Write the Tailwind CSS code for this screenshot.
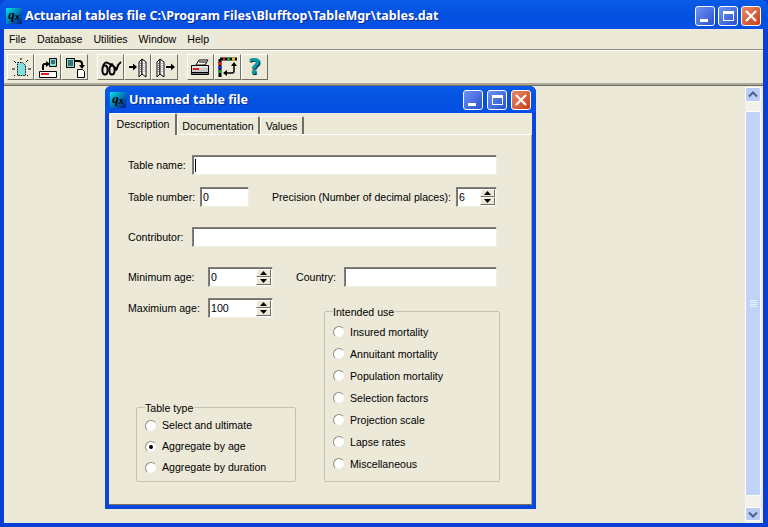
<!DOCTYPE html>
<html>
<head>
<meta charset="utf-8">
<script src="https://cdn.jsdelivr.net/npm/@tailwindcss/browser@4"></script>
</head>
<body class="m-0 overflow-hidden bg-[#ece9d8]">
<div class="relative flex h-[527px] w-[768px] flex-col overflow-hidden bg-[#0a3fd6] font-['Liberation_Sans',sans-serif] text-[10.6px] leading-none text-black">

  <!-- main title bar -->
  <div class="flex h-[29px] shrink-0 items-center rounded-t-[7px] bg-gradient-to-b from-[#0a5be8] via-[#0451e0] to-[#0550e6] pl-[6px] pr-[7px] pt-[3px]">
    <div class="flex h-4 w-4 items-start justify-center bg-gradient-to-br from-[#19e6e6] to-[#0a0a80] font-['Liberation_Serif',serif] text-[13px] font-bold italic text-black">q<span class="mt-[4px] text-[10px]">x</span></div>
    <div class="ml-[3px] flex-1 whitespace-nowrap font-['Noto_Sans',sans-serif] text-[12.5px] font-bold text-white [text-shadow:1px_1px_0_#0a2f9c]">Actuarial tables file C:\Program Files\Blufftop\TableMgr\tables.dat</div>
    <div class="flex gap-[3px]">
      <div class="flex h-[20px] w-[20px] items-end justify-start rounded-[3px] border border-white bg-gradient-to-br from-[#6f93f0] to-[#2a50d0] pb-[3px] pl-[4px]"><div class="h-[3px] w-[8px] bg-white"></div></div>
      <div class="flex h-[20px] w-[20px] items-center justify-center rounded-[3px] border border-white bg-gradient-to-br from-[#6f93f0] to-[#2a50d0]"><div class="h-[10px] w-[11px] border border-t-[3px] border-white"></div></div>
      <div class="flex h-[20px] w-[20px] items-center justify-center rounded-[3px] border border-white bg-gradient-to-br from-[#e88a66] to-[#c83a16]"><svg width="12" height="12" viewBox="0 0 12 12"><path d="M1 1L11 11M11 1L1 11" stroke="#fff" stroke-width="2.2"/></svg></div>
    </div>
  </div>

  <div class="flex min-h-0 flex-1 pb-[4px] pl-[4px] pr-[5px]">
    <div class="flex min-w-0 flex-1 flex-col bg-[#ece9d8]">
      <!-- menu -->
      <div class="flex h-[20px] shrink-0 items-center gap-[11px] border-b border-[#ece9d8] pl-[5px] pt-[2px]">
        <span>File</span><span>Database</span><span>Utilities</span><span>Window</span><span>Help</span>
      </div>
      <!-- toolbar -->
      <div class="flex h-[34px] shrink-0 items-center border-t border-[#8f8d7f] shadow-[inset_0_1px_0_#fff] pl-[3px] pt-[1px]">
        <div class="flex">
          <div class="flex h-[26px] w-[27px] items-center justify-center border border-b-[#716f64] border-l-white border-r-[#716f64] border-t-white bg-[#ece9d8]">
            <svg width="24" height="24" viewBox="0 0 24 24"><path d="M8.500 7.500h5l3 3v10h-8z" fill="#7fe0e0"/><path d="M8.500 7.500h5l3 3v10h-8z" fill="none" stroke="#000" stroke-dasharray="1.500 1"/><path d="M12 3v2M5 6l2 2M3 14h3M5 21l1-1M19 14h3M19 5l-2 2M19 21l-1-1" stroke="#000"/></svg>
          </div>
          <div class="flex h-[26px] w-[27px] items-center justify-center border border-b-[#716f64] border-l-white border-r-[#716f64] border-t-white bg-[#ece9d8]">
            <svg width="24" height="24" viewBox="0 0 24 24"><path d="M13.5 3.5h7v8h-7z" fill="#7fe0e0" stroke="#000"/><path d="M15 6h4M15 8h4" stroke="#000"/><path d="M7 15v-4q0-2 2-2h2" fill="none" stroke="#000" stroke-width="2"/><path d="M10 6l4 3-4 3z"/><path d="M3.5 16.5h17v6h-17z" fill="#fff" stroke="#000"/><path d="M5 19h8" stroke="#e02020" stroke-width="2"/></svg>
          </div>
          <div class="flex h-[26px] w-[27px] items-center justify-center border border-b-[#716f64] border-l-white border-r-[#716f64] border-t-white bg-[#ece9d8]">
            <svg width="24" height="24" viewBox="0 0 24 24"><path d="M3.5 3.5h8v9h-8z" fill="#7fe0e0" stroke="#000"/><path d="M5 6h5M5 8h5M5 10h5" stroke="#000"/><path d="M12 6h4q3 0 3 3v2" fill="none" stroke="#000" stroke-width="2"/><path d="M16 10h6l-3 4z"/><path d="M14.5 14.5h5l2 2v6h-7z" fill="#fff" stroke="#000"/></svg>
          </div>
        </div>
        <div class="ml-[9px] flex">
          <div class="flex h-[26px] w-[27px] items-center justify-center border border-b-[#716f64] border-l-white border-r-[#716f64] border-t-white bg-[#ece9d8]">
            <svg width="24" height="24" viewBox="0 0 24 24"><g fill="none" stroke="#000" stroke-width="2"><ellipse cx="6" cy="15" rx="2.600" ry="4.500"/><ellipse cx="13" cy="15" rx="2.600" ry="4.500"/><path d="M4 11q2-5 5-3t5 1"/><path d="M16 12q1 5 2 1t4-6"/></g></svg>
          </div>
          <div class="flex h-[26px] w-[27px] items-center justify-center border border-b-[#716f64] border-l-white border-r-[#716f64] border-t-white bg-[#ece9d8]">
            <svg width="24" height="24" viewBox="0 0 24 24"><path d="M3 12h5" stroke="#000" stroke-width="2"/><path d="M7 8.500l4 3.500-4 3.500z"/><g fill="#fff" stroke="#000"><path d="M13 7l3-3v15l-3 3z"/><path d="M16 4l4 3v15l-4-3z"/></g><path d="M14.500 8v9M18 8v9" stroke="#808080" stroke-dasharray="1 1"/></svg>
          </div>
          <div class="flex h-[26px] w-[27px] items-center justify-center border border-b-[#716f64] border-l-white border-r-[#716f64] border-t-white bg-[#ece9d8]">
            <svg width="24" height="24" viewBox="0 0 24 24"><g fill="#fff" stroke="#000"><path d="M4 7l3-3v15l-3 3z"/><path d="M7 4l4 3v15l-4-3z"/></g><path d="M5.500 8v9M9 8v9" stroke="#808080" stroke-dasharray="1 1"/><path d="M13 12h6" stroke="#000" stroke-width="2"/><path d="M18 8.500l4 3.500-4 3.500z"/></svg>
          </div>
        </div>
        <div class="ml-[9px] flex">
          <div class="flex h-[26px] w-[27px] items-center justify-center border border-b-[#716f64] border-l-white border-r-[#716f64] border-t-white bg-[#ece9d8]">
            <svg width="24" height="24" viewBox="0 0 24 24"><path d="M7 10l3-5h9l-3 5z" fill="#fff" stroke="#000"/><path d="M10 7h7" stroke="#000"/><path d="M2.500 10.500h17v7h-17z" fill="#c8c8c8" stroke="#000"/><path d="M2.500 17.500h17v2h-17z" fill="#707070" stroke="#000"/><path d="M4 14h6" stroke="#e02020" stroke-width="2"/><path d="M3 12h16" stroke="#fff"/></svg>
          </div>
          <div class="flex h-[26px] w-[27px] items-center justify-center border border-b-[#716f64] border-l-white border-r-[#716f64] border-t-white bg-[#ece9d8]">
            <svg width="24" height="24" viewBox="0 0 24 24"><path d="M4 4h17" stroke="#000" stroke-width="3"/><path d="M7 4h2" stroke="#e02020" stroke-width="3"/><path d="M11 4h3" stroke="#20a020" stroke-width="3"/><path d="M16 4h3" stroke="#e0c020" stroke-width="3"/><path d="M4 4v18" stroke="#000" stroke-width="3"/><path d="M4 7v3" stroke="#e02020" stroke-width="3"/><path d="M4 11v3" stroke="#2020e0" stroke-width="3"/><path d="M4 15v3" stroke="#20a020" stroke-width="3"/><path d="M18 9v7q0 2-2 2H11" fill="none" stroke="#000" stroke-width="1.500"/><path d="M11 15l-4 3 4 3zM15 11l3-4 3 4z"/></svg>
          </div>
          <div class="flex h-[26px] w-[27px] items-center justify-center border border-b-[#716f64] border-l-white border-r-[#716f64] border-t-white bg-[#ece9d8] font-['DejaVu_Sans',sans-serif] text-[22px] font-bold text-[#0a9a9a] [text-shadow:1px_1px_0_#06305a]">?</div>
        </div>
      </div>

      <!-- MDI client area -->
      <div class="relative flex min-h-0 flex-1 justify-end border-t-2 border-t-[#aca899] shadow-[inset_0_1px_0_#716f64]">
        <!-- scrollbar -->
        <div class="mr-[2px] mt-[2px] flex w-[16px] flex-col bg-[#f3f1ec]">
          <div class="flex h-[15px] w-[16px] items-center justify-center rounded-[2px] border border-white bg-[#b9cdf8]"><svg width="10" height="7" viewBox="0 0 10 7"><path d="M1 5.500L5 1.500L9 5.500" fill="none" stroke="#4d6185" stroke-width="2"/></svg></div>
          <div class="mt-[9px] flex h-[385px] w-[16px] items-center justify-center rounded-[2px] border border-white bg-[#c1d3fb]">
            <div class="flex w-[7px] flex-col gap-[1px]"><div class="h-px bg-[#eef4fe]"></div><div class="h-px bg-[#eef4fe]"></div><div class="h-px bg-[#eef4fe]"></div><div class="h-px bg-[#eef4fe]"></div></div>
          </div>
          <div class="mt-[11px] flex h-[14px] w-[16px] items-center justify-center rounded-[2px] border border-white bg-[#b9cdf8]"><svg width="10" height="7" viewBox="0 0 10 7"><path d="M1 1.500L5 5.500L9 1.500" fill="none" stroke="#4d6185" stroke-width="2"/></svg></div>
        </div>

        <!-- child window -->
        <div class="absolute left-[101px] top-[1px] flex h-[423px] w-[431px] flex-col rounded-t-[6px] bg-[#0a45dc]">
          <div class="flex h-[27px] shrink-0 items-center rounded-t-[6px] bg-gradient-to-b from-[#0a5be8] via-[#0451e0] to-[#0550e6] pl-[5px] pr-[5px] pt-[1px]">
            <div class="flex h-4 w-4 items-start justify-center bg-gradient-to-br from-[#19e6e6] to-[#0a0a80] font-['Liberation_Serif',serif] text-[13px] font-bold italic text-black">q<span class="mt-[4px] text-[10px]">x</span></div>
            <div class="ml-[3px] flex-1 whitespace-nowrap font-['Noto_Sans',sans-serif] text-[12.5px] font-bold text-white [text-shadow:1px_1px_0_#0a2f9c]">Unnamed table file</div>
            <div class="flex gap-[4px]">
              <div class="flex h-[20px] w-[20px] items-end justify-start rounded-[3px] border border-white bg-gradient-to-br from-[#6f93f0] to-[#2a50d0] pb-[3px] pl-[4px]"><div class="h-[3px] w-[8px] bg-white"></div></div>
              <div class="flex h-[20px] w-[20px] items-center justify-center rounded-[3px] border border-white bg-gradient-to-br from-[#6f93f0] to-[#2a50d0]"><div class="h-[10px] w-[11px] border border-t-[3px] border-white"></div></div>
              <div class="flex h-[20px] w-[20px] items-center justify-center rounded-[3px] border border-white bg-gradient-to-br from-[#e88a66] to-[#c83a16]"><svg width="12" height="12" viewBox="0 0 12 12"><path d="M1 1L11 11M11 1L1 11" stroke="#fff" stroke-width="2.2"/></svg></div>
            </div>
          </div>

          <div class="mx-[4px] mb-[4px] flex min-h-0 flex-1 flex-col bg-[#ece9d8]">
            <!-- tabs -->
            <div class="flex h-[21px] shrink-0 items-end pl-[1px]">
              <div class="z-10 mb-[-1px] flex h-[22px] w-[67px] items-center justify-center rounded-t-[2px] border-l border-r-2 border-t border-l-white border-r-[#716f64] border-t-white bg-[#ece9d8]">Description</div>
              <div class="flex h-[18px] w-[83px] items-center justify-center rounded-t-[2px] border-l border-r-2 border-t border-l-white border-r-[#716f64] border-t-white pt-[1px]">Documentation</div>
              <div class="flex h-[18px] w-[44px] items-center justify-center rounded-t-[2px] border-l border-r-2 border-t border-l-white border-r-[#716f64] border-t-white pt-[1px]">Values</div>
            </div>
            <!-- pane -->
            <div class="flex min-h-0 flex-1 flex-col border-b border-r border-t border-b-[#716f64] border-r-[#aca899] border-t-white pl-[19px] pt-[20px]">
              <div class="flex h-5 items-center">
                <span class="w-[64px]">Table name:</span>
                <div class="flex h-5 w-[305px] items-center border border-b-[#f1efe2] border-l-[#808080] border-r-[#f1efe2] border-t-[#808080] bg-white pl-[2px] shadow-[inset_1px_1px_0_#716f64]"><div class="h-[13px] w-px bg-black"></div></div>
              </div>
              <div class="mt-[12px] flex h-5 items-center">
                <span class="w-[72px]">Table number:</span>
                <div class="flex h-5 w-[49px] items-center border border-b-[#f1efe2] border-l-[#808080] border-r-[#f1efe2] border-t-[#808080] bg-white pl-[2px] shadow-[inset_1px_1px_0_#716f64]">0</div>
                <span class="ml-[23px] w-[184px] whitespace-nowrap">Precision (Number of decimal places):</span>
                <div class="flex h-5 w-[41px] items-center justify-between border border-b-[#f1efe2] border-l-[#808080] border-r-[#f1efe2] border-t-[#808080] bg-white pl-[2px] shadow-[inset_1px_1px_0_#716f64]">6
                  <div class="mr-[1px] flex h-4 w-[15px] flex-col">
                    <div class="flex h-2 items-center justify-center border border-b-[#716f64] border-l-white border-r-[#716f64] border-t-white bg-[#ece9d8]"><svg width="7" height="4" viewBox="0 0 7 4"><path d="M3.500 0L7 4H0z"/></svg></div>
                    <div class="flex h-2 items-center justify-center border border-b-[#716f64] border-l-white border-r-[#716f64] border-t-white bg-[#ece9d8]"><svg width="7" height="4" viewBox="0 0 7 4"><path d="M0 0h7L3.500 4z"/></svg></div>
                  </div>
                </div>
              </div>
              <div class="mt-[20px] flex h-5 items-center">
                <span class="w-[64px]">Contributor:</span>
                <div class="h-5 w-[305px] border border-b-[#f1efe2] border-l-[#808080] border-r-[#f1efe2] border-t-[#808080] bg-white shadow-[inset_1px_1px_0_#716f64]"></div>
              </div>
              <div class="mt-[20px] flex h-5 items-center">
                <span class="w-[80px]">Minimum age:</span>
                <div class="flex h-5 w-[65px] items-center justify-between border border-b-[#f1efe2] border-l-[#808080] border-r-[#f1efe2] border-t-[#808080] bg-white pl-[2px] shadow-[inset_1px_1px_0_#716f64]">0
                  <div class="mr-[1px] flex h-4 w-[15px] flex-col">
                    <div class="flex h-2 items-center justify-center border border-b-[#716f64] border-l-white border-r-[#716f64] border-t-white bg-[#ece9d8]"><svg width="7" height="4" viewBox="0 0 7 4"><path d="M3.500 0L7 4H0z"/></svg></div>
                    <div class="flex h-2 items-center justify-center border border-b-[#716f64] border-l-white border-r-[#716f64] border-t-white bg-[#ece9d8]"><svg width="7" height="4" viewBox="0 0 7 4"><path d="M0 0h7L3.500 4z"/></svg></div>
                  </div>
                </div>
                <span class="ml-[23px] w-[48px]">Country:</span>
                <div class="h-5 w-[153px] border border-b-[#f1efe2] border-l-[#808080] border-r-[#f1efe2] border-t-[#808080] bg-white shadow-[inset_1px_1px_0_#716f64]"></div>
              </div>
              <div class="mt-[11px] flex">
                <div class="w-[196px]">
                  <div class="flex h-5 items-center">
                    <span class="w-[80px]">Maximium age:</span>
                    <div class="flex h-5 w-[65px] items-center justify-between border border-b-[#f1efe2] border-l-[#808080] border-r-[#f1efe2] border-t-[#808080] bg-white pl-[2px] shadow-[inset_1px_1px_0_#716f64]">100
                      <div class="mr-[1px] flex h-4 w-[15px] flex-col">
                        <div class="flex h-2 items-center justify-center border border-b-[#716f64] border-l-white border-r-[#716f64] border-t-white bg-[#ece9d8]"><svg width="7" height="4" viewBox="0 0 7 4"><path d="M3.500 0L7 4H0z"/></svg></div>
                        <div class="flex h-2 items-center justify-center border border-b-[#716f64] border-l-white border-r-[#716f64] border-t-white bg-[#ece9d8]"><svg width="7" height="4" viewBox="0 0 7 4"><path d="M0 0h7L3.500 4z"/></svg></div>
                      </div>
                    </div>
                  </div>
                  <div class="relative ml-[8px] mt-[89px] flex h-[75px] w-[160px] flex-col rounded-[2px] border border-[#c5c2b0] pl-[8px] pt-[7px]">
                    <span class="absolute left-[8px] top-[-5px] bg-[#ece9d8] pr-px">Table type</span>
                    <div class="flex h-[21px] items-center"><span class="h-3 w-3 rounded-full border border-b-[#e8e6da] border-l-[#8f8d7f] border-r-[#e8e6da] border-t-[#8f8d7f] bg-white"></span><span class="ml-[5px]">Select and ultimate</span></div>
                    <div class="flex h-[21px] items-center"><span class="flex h-3 w-3 items-center justify-center rounded-full border border-b-[#e8e6da] border-l-[#8f8d7f] border-r-[#e8e6da] border-t-[#8f8d7f] bg-white"><span class="h-[4px] w-[4px] rounded-full bg-black"></span></span><span class="ml-[5px]">Aggregate by age</span></div>
                    <div class="flex h-[21px] items-center"><span class="h-3 w-3 rounded-full border border-b-[#e8e6da] border-l-[#8f8d7f] border-r-[#e8e6da] border-t-[#8f8d7f] bg-white"></span><span class="ml-[5px]">Aggregate by duration</span></div>
                  </div>
                </div>
                <div class="relative mt-[13px] flex h-[171px] w-[176px] flex-col rounded-[2px] border border-[#c5c2b0] pl-[8px] pt-[9px]">
                  <span class="absolute left-[8px] top-[-5px] bg-[#ece9d8] pr-px">Intended use</span>
                  <div class="flex h-[22px] items-center"><span class="h-3 w-3 rounded-full border border-b-[#e8e6da] border-l-[#8f8d7f] border-r-[#e8e6da] border-t-[#8f8d7f] bg-white"></span><span class="ml-[5px]">Insured mortality</span></div>
                  <div class="flex h-[22px] items-center"><span class="h-3 w-3 rounded-full border border-b-[#e8e6da] border-l-[#8f8d7f] border-r-[#e8e6da] border-t-[#8f8d7f] bg-white"></span><span class="ml-[5px]">Annuitant mortality</span></div>
                  <div class="flex h-[22px] items-center"><span class="h-3 w-3 rounded-full border border-b-[#e8e6da] border-l-[#8f8d7f] border-r-[#e8e6da] border-t-[#8f8d7f] bg-white"></span><span class="ml-[5px]">Population mortality</span></div>
                  <div class="flex h-[22px] items-center"><span class="h-3 w-3 rounded-full border border-b-[#e8e6da] border-l-[#8f8d7f] border-r-[#e8e6da] border-t-[#8f8d7f] bg-white"></span><span class="ml-[5px]">Selection factors</span></div>
                  <div class="flex h-[22px] items-center"><span class="h-3 w-3 rounded-full border border-b-[#e8e6da] border-l-[#8f8d7f] border-r-[#e8e6da] border-t-[#8f8d7f] bg-white"></span><span class="ml-[5px]">Projection scale</span></div>
                  <div class="flex h-[22px] items-center"><span class="h-3 w-3 rounded-full border border-b-[#e8e6da] border-l-[#8f8d7f] border-r-[#e8e6da] border-t-[#8f8d7f] bg-white"></span><span class="ml-[5px]">Lapse rates</span></div>
                  <div class="flex h-[22px] items-center"><span class="h-3 w-3 rounded-full border border-b-[#e8e6da] border-l-[#8f8d7f] border-r-[#e8e6da] border-t-[#8f8d7f] bg-white"></span><span class="ml-[5px]">Miscellaneous</span></div>
                </div>
              </div>
            </div>
          </div>
        </div>
      </div>
    </div>
  </div>
</div>
</body>
</html>
